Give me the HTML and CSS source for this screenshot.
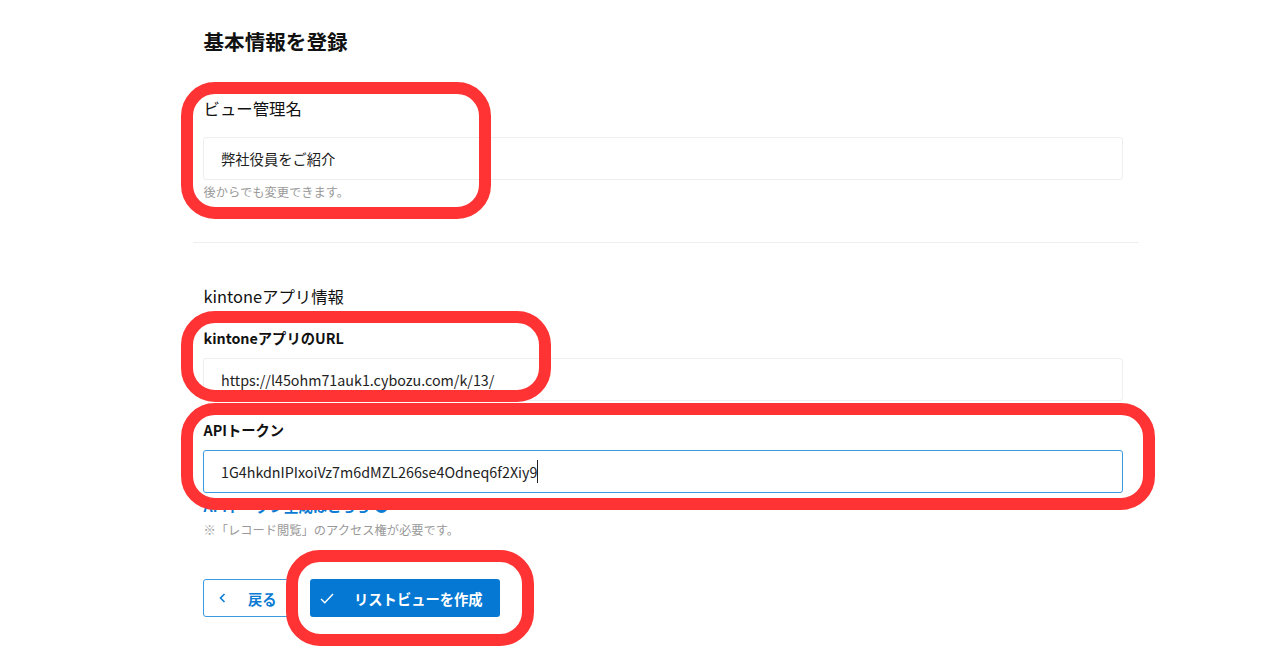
FILE: index.html
```html
<!DOCTYPE html>
<html lang="ja">
<head>
    <meta charset="UTF-8">
    <meta name="viewport" content="width=device-width, initial-scale=1.0">
    <title>基本情報を登録</title>
    <link rel="stylesheet" href="styles.css">
</head>
<body>
    <main class="container">
        <div class="inner">
            <h1 class="title">基本情報を登録</h1>
            <div class="view-name">
                <label class="label-large">ビュー管理名</label>
                <div class="field">弊社役員をご紹介</div>
                <p class="help">後からでも変更できます。</p>
            </div>
        </div>
        <hr class="divider">
        <div class="inner">
            <h2 class="label-large app-title">kintoneアプリ情報</h2>
            <label class="label-bold">kintoneアプリのURL</label>
            <div class="field">https://l45ohm71auk1.cybozu.com/k/13/</div>
            <label class="label-bold token-label">APIトークン</label>
            <div class="field field-focus"><span class="caret">1G4hkdnIPIxoiVz7m6dMZL266se4Odneq6f2Xiy9</span></div>
            <a class="token-link" href="#">APIトークン生成はこちら
                <svg class="link-icon" width="13" height="13" viewBox="0 0 12 12"><circle cx="6" cy="6" r="6" fill="#0b7bd3"/><path d="M4.8 3.4 7.4 6 4.8 8.6" fill="none" stroke="#fff" stroke-width="1.4"/></svg>
            </a>
            <p class="help">※「レコード閲覧」のアクセス権が必要です。</p>
            <div class="actions">
                <button class="btn btn-back">
                    <svg width="7" height="10" viewBox="0 0 7 10"><path d="M5.5 1 1.5 5l4 4" fill="none" stroke="#0b7bd3" stroke-width="1.6"/></svg>
                    戻る
                </button>
                <button class="btn btn-create">
                    <svg width="14" height="11" viewBox="0 0 14 11"><path d="M1 6 4.8 9.8 13 1" fill="none" stroke="#fff" stroke-width="1.4"/></svg>
                    リストビューを作成
                </button>
            </div>
        </div>
    </main>

    <!-- annotation frames drawn over the screenshot -->
    <div class="mark mark-name"></div>
    <div class="mark mark-url"></div>
    <div class="mark mark-token"></div>
    <div class="mark mark-create"></div>
</body>
</html>
```

FILE: styles.css
```css
body {
    font-family: "Noto Sans CJK JP", "Noto Sans", sans-serif;
    margin: 0;
    padding: 0;
    height: 670px;
    overflow: hidden;
    position: relative;
    background-color: #fff;
    color: #111;
}
.container {
    width: 946px;
    margin-left: 193px;
}
.inner {
    padding: 0 16px 0 10px;
}
.title {
    margin: 0;
    padding: 26px 0 0 0.5px;
    font-size: 20.6px;
    line-height: 30px;
    font-weight: 700;
}
.view-name {
    padding-top: 40px;
}
.label-large {
    display: block;
    margin: 0;
    padding-left: 0.5px;
    font-size: 16.4px;
    line-height: 24px;
    font-weight: 400;
}
.label-bold {
    display: block;
    padding-left: 0.5px;
    font-size: 14.3px;
    line-height: 20px;
    font-weight: 700;
}
.field {
    box-sizing: border-box;
    height: 43px;
    margin-top: 17px;
    padding: 0 17px;
    border: 1px solid #eeeeee;
    border-radius: 3px;
    font-size: 14.3px;
    line-height: 41px;
    color: #222;
}
.label-bold + .field {
    margin-top: 10px;
}
.field-focus {
    border-color: #3b9ae1;
}
.caret {
    border-right: 1px solid #222;
    padding: 1px 0;
}
.help {
    margin: 4px 0 0;
    padding-left: 0.5px;
    font-size: 12.25px;
    line-height: 17px;
    color: #999;
}
.divider {
    margin: 41px 0 0;
    border: none;
    border-top: 1px solid #eeeeee;
}
.app-title {
    margin-top: 41px;
    margin-bottom: 20px;
}
.token-label {
    margin-top: 19px;
}
.token-link {
    display: block;
    margin-top: 3px;
    padding-left: 0.5px;
    font-size: 14.3px;
    line-height: 20px;
    font-weight: 700;
    color: #0b7bd3;
    text-decoration: none;
}
.link-icon {
    margin-left: 2px;
    vertical-align: -1px;
}
.token-link + .help {
    margin-top: 6px;
}
.actions {
    display: flex;
    gap: 20px;
    margin-top: 40px;
}
.btn {
    display: flex;
    align-items: center;
    box-sizing: border-box;
    height: 38px;
    border-radius: 3px;
    font-family: inherit;
    font-size: 14.3px;
    font-weight: 700;
    padding: 0;
}
.btn-back {
    width: 87px;
    gap: 22px;
    padding-left: 15px;
    background-color: #fff;
    border: 1px solid #3b9ae1;
    color: #0b7bd3;
}
.btn-create {
    width: 190px;
    gap: 20px;
    padding-left: 10px;
    background-color: #0478d2;
    border: none;
    color: #fff;
}
.mark {
    position: absolute;
    box-sizing: border-box;
    border: 12px solid #ff3333;
    border-radius: 34px;
}
.mark-name {
    left: 181px;
    top: 82px;
    width: 310px;
    height: 137px;
}
.mark-url {
    left: 181px;
    top: 311px;
    width: 370px;
    height: 91px;
}
.mark-token {
    left: 181px;
    top: 403px;
    width: 974px;
    height: 107px;
}
.mark-create {
    left: 286px;
    top: 550px;
    width: 248px;
    height: 96px;
}
```
